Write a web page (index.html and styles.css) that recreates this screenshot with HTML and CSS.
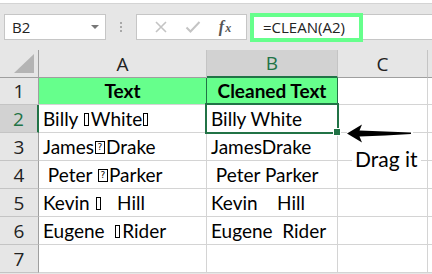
FILE: index.html
```html
<!DOCTYPE html>
<html lang="en">
<head>
    <meta charset="UTF-8">
    <title>CLEAN function</title>
    <link rel="stylesheet" href="styles.css">
</head>
<body>
    <div class="ribbon-edge"></div>
    <div class="formula-bar">
        <div class="name-box">
            <span>B2</span>
            <span class="caret"></span>
        </div>
        <div class="grip"><i></i><i></i><i></i></div>
        <div class="fx-buttons">
            <svg width="14" height="14" viewBox="0 0 14 14"><path d="M2 2 L12 12 M12 2 L2 12" stroke="#c4c4c4" stroke-width="1.6" fill="none"/></svg>
            <svg width="16" height="14" viewBox="0 0 16 14"><path d="M1.5 7.5 L5.5 11.5 L14.5 2" stroke="#c4c4c4" stroke-width="2" fill="none"/></svg>
            <span class="fx">f<span class="fx-x">x</span></span>
        </div>
        <div class="formula-input">
            <div class="formula-active">=CLEAN(A2)</div>
            <div class="formula-rest"></div>
        </div>
    </div>

    <div class="sheet">
        <div class="corner"><span class="select-all"></span></div>
        <div class="col-head">A</div>
        <div class="col-head selected">B</div>
        <div class="col-head">C</div>
        <div class="col-head last"></div>

        <div class="row-head">1</div>
        <div class="cell title">Text</div>
        <div class="cell title title-b">Cleaned Text</div>
        <div class="cell"></div>
        <div class="cell last"></div>

        <div class="row-head selected">2</div>
        <div class="cell">Billy <span class="box"></span>White<span class="box"></span></div>
        <div class="cell active">Billy White</div>
        <div class="cell"></div>
        <div class="cell last"></div>

        <div class="row-head">3</div>
        <div class="cell">James<span class="qbox">?</span>Drake</div>
        <div class="cell">JamesDrake</div>
        <div class="cell"></div>
        <div class="cell last"></div>

        <div class="row-head">4</div>
        <div class="cell"> Peter <span class="qbox">?</span>Parker</div>
        <div class="cell"> Peter Parker</div>
        <div class="cell"></div>
        <div class="cell last"></div>

        <div class="row-head">5</div>
        <div class="cell">Kevin <span class="box"></span>   Hill</div>
        <div class="cell">Kevin    Hill</div>
        <div class="cell"></div>
        <div class="cell last"></div>

        <div class="row-head">6</div>
        <div class="cell">Eugene  <span class="box"></span>Rider</div>
        <div class="cell">Eugene  Rider</div>
        <div class="cell"></div>
        <div class="cell last"></div>

        <div class="row-head">7</div>
        <div class="cell"></div>
        <div class="cell"></div>
        <div class="cell"></div>
        <div class="cell last"></div>

        <svg class="arrow" width="66" height="22" viewBox="0 0 66 22">
            <path d="M0 9.5 L15 0.5 L12.5 6.5 Q38 7.5 64 8.5 L64 10 Q38 11.5 12.5 12.5 L15 18.5 Z" fill="#000"/>
        </svg>
        <div class="note">Drag it</div>
    </div>
</body>
</html>
```

FILE: styles.css
```css
body {
    margin: 0;
    width: 432px;
    height: 274px;
    overflow: hidden;
    background-color: #e6e6e6;
    font-family: "Open Sans", "Noto Sans", sans-serif;
    color: #000;
}
.ribbon-edge {
    height: 3px;
    background-color: #fff;
    border-bottom: 1px solid #d4d4d4;
}
.formula-bar {
    display: flex;
    align-items: flex-start;
    height: 46px;
    padding: 9px 0 0 4px;
    box-sizing: border-box;
}
.name-box {
    display: flex;
    align-items: center;
    justify-content: space-between;
    width: 102px;
    height: 26px;
    margin-top: 1px;
    padding: 0 6px 0 7px;
    box-sizing: border-box;
    background-color: #fff;
    border: 1px solid #c6c6c6;
    font-size: 15px;
    color: #222;
}
.caret {
    width: 0;
    height: 0;
    border-left: 4px solid transparent;
    border-right: 4px solid transparent;
    border-top: 4px solid #777;
}
.grip {
    display: flex;
    flex-direction: column;
    gap: 2px;
    width: 30px;
    margin-top: 9px;
    align-items: center;
}
.grip i {
    width: 2px;
    height: 2px;
    background-color: #a8a8a8;
}
.fx-buttons {
    display: flex;
    align-items: center;
    justify-content: space-around;
    width: 111px;
    height: 26px;
    margin-top: 1px;
    padding: 0 6px 0 8px;
    box-sizing: border-box;
    background-color: #fff;
    border: 1px solid #c6c6c6;
}
.fx {
    font-family: "Liberation Serif", "DejaVu Serif", serif;
    font-style: italic;
    font-weight: bold;
    font-size: 16px;
    color: #555;
}
.fx-x {
    font-size: 12px;
    margin-left: 1px;
}
.formula-input {
    display: flex;
    align-items: flex-start;
    flex: 1;
    margin-left: 3px;
}
.formula-active {
    width: 113px;
    height: 29px;
    padding-left: 9px;
    box-sizing: border-box;
    border: 4px solid #66ff8c;
    background-color: #fff;
    font-size: 15px;
    line-height: 21px;
    color: #222;
}
.formula-rest {
    flex: 1;
    height: 26px;
    margin-top: 1px;
    box-sizing: border-box;
    background-color: #fff;
    border-top: 1px solid #c6c6c6;
    border-bottom: 1px solid #c6c6c6;
}

.sheet {
    position: relative;
    display: grid;
    grid-template-columns: 39px 168px 131px 90px 1fr;
    grid-template-rows: 28px 27px repeat(6, 28px);
    background-color: #fff;
}
.corner, .col-head, .row-head {
    display: flex;
    align-items: center;
    justify-content: center;
    box-sizing: border-box;
    background-color: #e6e6e6;
    font-size: 19px;
    color: #222;
}
.corner {
    align-items: flex-end;
    justify-content: flex-end;
    padding: 0 4px 4px 0;
    border-right: 1px solid #9f9f9f;
    border-bottom: 1px solid #9f9f9f;
}
.select-all {
    width: 0;
    height: 0;
    border-left: 20px solid transparent;
    border-bottom: 19px solid #b4b4b4;
}
.col-head {
    border-right: 1px solid #c4c4c4;
    border-bottom: 1px solid #9f9f9f;
}
.col-head.selected {
    background-color: #d2d2d2;
    color: #217346;
    border-bottom: 2px solid #217346;
}
.col-head.last {
    border-right: none;
}
.row-head {
    border-right: 1px solid #9f9f9f;
    border-bottom: 1px solid #c4c4c4;
}
.row-head.selected {
    background-color: #d2d2d2;
    color: #217346;
    border-right: 2px solid #217346;
}
.cell {
    display: flex;
    align-items: flex-end;
    padding: 0 0 2px 4px;
    box-sizing: border-box;
    border-right: 1px solid #d4d4d4;
    border-bottom: 1px solid #d4d4d4;
    font-family: "Lato", "Noto Sans", sans-serif;
    font-size: 19px;
    white-space: pre;
    overflow: hidden;
}
.cell.last {
    border-right: none;
}
.title {
    justify-content: center;
    padding-left: 0;
    background-color: #66ff8c;
    font-weight: bold;
}
.title-b {
    border-left: 1px solid #217346;
    border-right: 1px solid #217346;
    margin-left: -1px;
}
.active {
    position: relative;
    overflow: visible;
    outline: 2px solid #217346;
    outline-offset: -1px;
    margin: -1px 0 0 -1px;
    padding-left: 5px;
}
.active::after {
    content: "";
    position: absolute;
    right: -4px;
    bottom: -4px;
    width: 6px;
    height: 6px;
    background-color: #217346;
    border: 1px solid #fff;
}
.box {
    display: inline-block;
    width: 3px;
    height: 11px;
    margin: 0 2px 4px 1px;
    border: 1.5px solid #000;
}
.qbox {
    display: inline-block;
    width: 8px;
    height: 11px;
    margin: 0 1px 4px;
    border: 1px solid #000;
    font-family: "DejaVu Sans", sans-serif;
    font-size: 9px;
    line-height: 11px;
    text-align: center;
}
.arrow {
    position: absolute;
    left: 347px;
    top: 74px;
    background-color: #fff;
}
.note {
    position: absolute;
    left: 352px;
    top: 96px;
    padding: 0 3px;
    background-color: #fff;
    font-family: "Lato", "Noto Sans", sans-serif;
    font-size: 21px;
}
```
